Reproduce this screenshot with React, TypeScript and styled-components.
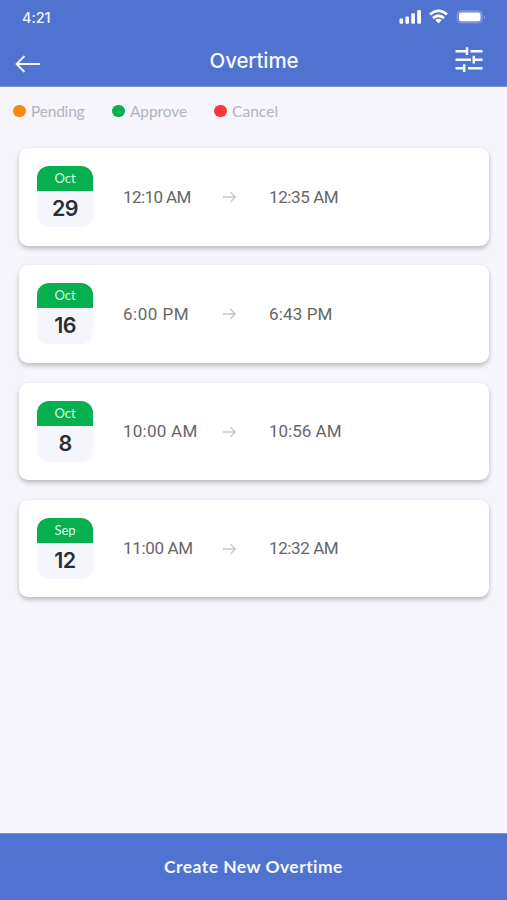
import React from "react";
import styled, { createGlobalStyle } from "styled-components";

const Global = createGlobalStyle`
  * { box-sizing: border-box; }
  body { margin: 0; background: #f5f5fb; }
`;

const Screen = styled.div`
  width: 507px;
  height: 900px;
  display: flex;
  flex-direction: column;
  overflow: hidden;
  background: #f5f5fb;
  font-family: Lato, "Open Sans", sans-serif;
  white-space: nowrap;
`;

const Header = styled.header`
  height: 87px;
  flex: none;
  background: #5072d1;
  border-bottom: 1px solid #7d96de;
  color: #f4f9ff;
  font-family: Inter, sans-serif;
`;

const StatusBar = styled.div`
  height: 34px;
  padding: 0 22px;
  display: flex;
  align-items: center;
  justify-content: space-between;
`;

const Clock = styled.span`
  font-size: 14.5px;
  font-weight: 500;
  letter-spacing: -0.1px;
`;

const StatusIcons = styled.svg`
  width: 87px;
  height: 18px;
`;

const NavBar = styled.div`
  height: 52px;
  padding: 0 23px 0 15px;
  display: grid;
  grid-template-columns: 29px 1fr 29px;
  align-items: center;
`;

const IconButton = styled.button<{ $drop?: number }>`
  border: 0;
  padding: 0;
  margin-top: ${(p) => p.$drop ?? 0}px;
  background: none;
  color: inherit;
  display: flex;
`;

const Title = styled.h1`
  margin: 0 0 0 9px;
  padding-top: 1px;
  text-align: center;
  font-size: 20.5px;
  font-weight: 500;
  letter-spacing: -0.12px;
  line-height: 26px;
`;

const Legend = styled.div`
  height: 61px;
  flex: none;
  padding: 12px 0 0 13px;
  display: flex;
  align-items: flex-start;
`;

const LegendItem = styled.div<{ $width: number; $spacing: number }>`
  width: ${(p) => p.$width}px;
  height: 24px;
  display: flex;
  align-items: center;
  gap: 5.5px;
  font-size: 15.5px;
  letter-spacing: ${(p) => p.$spacing}px;
  color: #b3b4bb;
`;

const Dot = styled.i<{ $color: string }>`
  width: 12.5px;
  height: 12.5px;
  border-radius: 50%;
  background: ${(p) => p.$color};
`;

const List = styled.main`
  flex: 1;
  padding: 0 18px 0 19px;
  display: flex;
  flex-direction: column;
  gap: 19.8px;
`;

const Card = styled.article`
  height: 97.5px;
  padding: 0 0 0.5px 18px;
  display: grid;
  grid-template-columns: 56px 30px 99px 47px 1fr;
  align-items: center;
  border-radius: 9px;
  background: #fff;
  box-shadow: 0 3px 5px rgba(0, 0, 0, 0.2), 0 1px 4px rgba(0, 0, 0, 0.06);
`;

const DateTile = styled.div`
  width: 56px;
  height: 61px;
  border-radius: 12px;
  overflow: hidden;
  background: #f4f6fb;
  text-align: center;
`;

const Month = styled.div`
  height: 25px;
  background: #06b04f;
  color: #dcffe6;
  font-size: 13px;
  line-height: 25px;
`;

const Day = styled.div`
  font-family: Inter, sans-serif;
  font-size: 21.5px;
  font-weight: 600;
  letter-spacing: -0.6px;
  line-height: 34px;
  color: #2b2d33;
`;

const Time = styled.time<{ $spacing: number }>`
  font-family: Roboto, sans-serif;
  font-size: 17px;
  letter-spacing: ${(p) => p.$spacing}px;
  color: #666668;
`;

const Footer = styled.button`
  height: 67px;
  flex: none;
  border: 0;
  border-top: 1px solid #7790dc;
  padding: 0 0 2px;
  background: #5072d1;
  color: #f4f9ff;
  font-family: Lato, sans-serif;
  font-size: 17.5px;
  font-weight: 700;
  letter-spacing: 0.45px;
`;

const entries = [
  { month: "Oct", day: 29, from: "12:10 AM", to: "12:35 AM", a: -0.6, b: -0.4 },
  { month: "Oct", day: 16, from: "6:00 PM", to: "6:43 PM", a: 0.5, b: 0.15 },
  { month: "Oct", day: 8, from: "10:00 AM", to: "10:56 AM", a: 0.25, b: 0 },
  { month: "Sep", day: 12, from: "11:00 AM", to: "12:32 AM", a: -0.35, b: -0.4 },
];

export default function App() {
  return (
    <>
      <Global />
      <Screen>
        <Header>
          <StatusBar>
            <Clock>4:21</Clock>
            <StatusIcons viewBox="398 8 87 18" fill="#fff">
              <rect x="399.5" y="18.5" width="3.6" height="5.2" rx="1" />
              <rect x="405.4" y="16.4" width="3.6" height="7.3" rx="1" />
              <rect x="411.3" y="13.3" width="3.6" height="10.4" rx="1" />
              <rect x="417.2" y="10" width="3.8" height="13.7" rx="1" />
              <g fill="none" stroke="#fff" strokeWidth="2.7">
                <path d="M430 14.6Q438.5 7.2 447 14.6" />
                <path d="M433 18.1Q438.5 13.4 444 18.1" />
              </g>
              <path d="M435.3 20.1Q438.5 17.5 441.7 20.1L438.5 23.5Z" />
              <rect x="457.2" y="10.8" width="25" height="12" rx="3.6" fill="#6d89da" stroke="#8a9fe0" />
              <rect x="459" y="12.5" width="21.5" height="8.7" rx="2.2" />
              <path d="M484 15V19Q485 18 485 17T484 15" fill="#91a5e2" />
            </StatusIcons>
          </StatusBar>
          <NavBar>
            <IconButton aria-label="Back" $drop={8}>
              <svg width="26" height="18" viewBox="0 0 26 18" fill="none" stroke="currentColor" strokeWidth="1.8">
                <path d="M25 9H1.5M9.5 1L1.5 9L9.5 17" />
              </svg>
            </IconButton>
            <Title>Overtime</Title>
            <IconButton aria-label="Filter" $drop={-1}>
              <svg width="29" height="26" viewBox="0 0 29 26" fill="none" stroke="currentColor" strokeWidth="2.5">
                <path d="M.5 4.2H12M15.5 4.2H27.5M12 .3V8M.5 12.7H16M19 12.7H27.5M18.8 8.8V16.6M.5 21.2H8M13 21.2H27.5M9.2 17.3V25" />
              </svg>
            </IconButton>
          </NavBar>
        </Header>
        <Legend>
          <LegendItem $width={99} $spacing={-0.2}><Dot $color="#f58a0b" />Pending</LegendItem>
          <LegendItem $width={102} $spacing={-0.1}><Dot $color="#08af50" />Approve</LegendItem>
          <LegendItem $width={80} $spacing={0.05}><Dot $color="#f9383d" />Cancel</LegendItem>
        </Legend>
        <List>
          {entries.map((e) => (
            <Card key={e.month + e.day}>
              <DateTile>
                <Month>{e.month}</Month>
                <Day>{e.day}</Day>
              </DateTile>
              <span />
              <Time $spacing={e.a}>{e.from}</Time>
              <svg width="15" height="13" viewBox="0 0 15 13" fill="none" stroke="#c6c6c8" strokeWidth="1.3">
                <path d="M1 7H13.3M8.3 2L13.3 7L8.3 12" />
              </svg>
              <Time $spacing={e.b}>{e.to}</Time>
            </Card>
          ))}
        </List>
        <Footer>Create New Overtime</Footer>
      </Screen>
    </>
  );
}
